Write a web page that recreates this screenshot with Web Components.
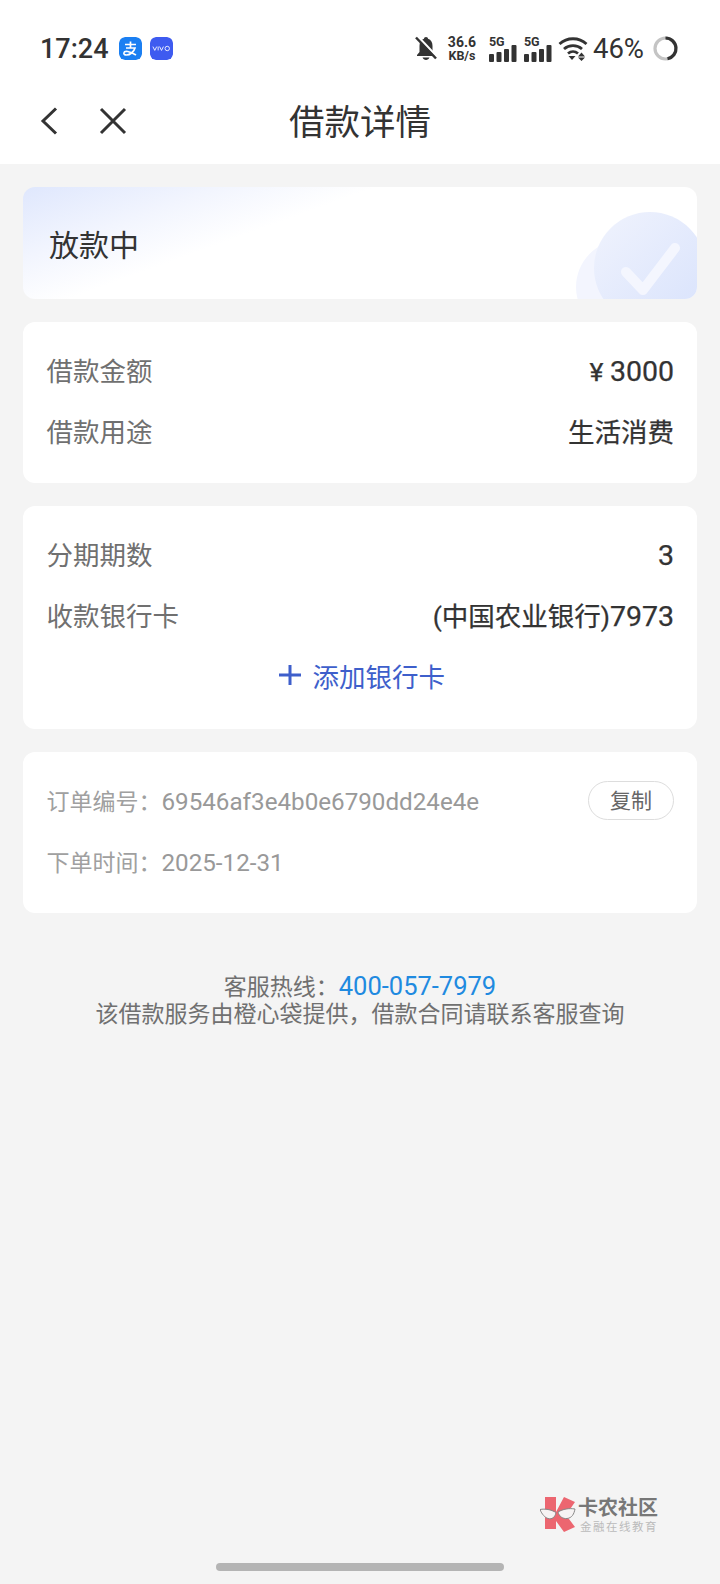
<!DOCTYPE html>
<html lang="zh">
<head>
<meta charset="utf-8">
<title>借款详情</title>
<style>
  html, body { margin: 0; padding: 0; }
  body {
    width: 720px;
    height: 1584px;
    background: #f4f4f4;
    font-family: "Noto Sans CJK SC", "Noto Sans", sans-serif;
    color: #333;
    position: relative;
    overflow: hidden;
  }
  main { display: flex; flex-direction: column; gap: 23px; padding: 23px 23px 0; }
  status-card { margin-bottom: -0.5px; }
</style>
</head>
<body>
  <status-bar></status-bar>
  <nav-bar>借款详情</nav-bar>
  <main>
    <status-card>放款中</status-card>
    <info-card>
      <info-row label="借款金额">¥ <span class="n">3000</span></info-row>
      <info-row label="借款用途">生活消费</info-row>
    </info-card>
    <info-card>
      <info-row label="分期期数"><span class="n">3</span></info-row>
      <info-row label="收款银行卡">(中国农业银行)<span class="n">7973</span></info-row>
      <add-card>添加银行卡</add-card>
    </info-card>
    <info-card>
      <order-row label="订单编号：" value="69546af3e4b0e6790dd24e4e" action="复制"></order-row>
      <order-row label="下单时间：" value="2025-12-31"></order-row>
    </info-card>
  </main>
  <service-note phone="400-057-7979"></service-note>
  <site-mark></site-mark>
  <home-bar></home-bar>

<script>
function el(name, html) {
  customElements.define(name, class extends HTMLElement {
    constructor() {
      super();
      this.attachShadow({ mode: "open" });
      this.shadowRoot.innerHTML = typeof html === "function" ? html(this) : html;
    }
  });
}

const signal = `
  <span class="sig">
    <b>5G</b>
    <svg width="28" height="18" viewBox="0 0 28 18" fill="#333">
      <rect x="0" y="9" width="5" height="8" rx="1"/>
      <rect x="7.500" y="7" width="5" height="10" rx="1"/>
      <rect x="15" y="4" width="5" height="13" rx="1"/>
      <rect x="22.500" y="0" width="5" height="17" rx="1"/>
    </svg>
  </span>`;

el("status-bar", `
  <style>
    :host { display: flex; align-items: center; height: 82px; padding: 15px 42px 0 40px; box-sizing: border-box; background: #fff; color: #333; font-family: Roboto, "Noto Sans", sans-serif; }
    .time { font-size: 27px; font-weight: 500; width: 79px; }
    .app { width: 23px; height: 23px; border-radius: 6px; margin-right: 8px; display: block; }
    .right { margin-left: auto; display: flex; align-items: center; }
    .speed { display: flex; flex-direction: column; align-items: center; font-size: 14px; font-weight: 700; line-height: 14px; margin: 0 12px 0 10px; width: 30px; }
    .speed small { font-size: 12.500px; }
    .sig { position: relative; display: block; width: 28px; height: 26px; margin-right: 7px; }
    .sig b { position: absolute; left: 0; top: -1px; font-size: 12.500px; line-height: 13px; font-weight: 700; }
    .sig svg { position: absolute; left: 0; bottom: -1px; }
    .wifi { margin-left: -1px; }
    .pct { font-size: 27.500px; font-weight: 400; margin: 0 9px 0 5px; }
  </style>
  <span class="time">17:24</span>
  <svg class="app" viewBox="0 0 23 23"><rect width="23" height="23" rx="6" fill="#1b7ff2"/><path d="M6 7.500h11M11.500 4.500v6M7 11h9c-1.200 4-5 7-8.500 7-2 0-3-1-2.500-2.500.6-2 5.500-1.500 12 2.500" fill="none" stroke="#fff" stroke-width="1.700"/></svg>
  <svg class="app" viewBox="0 0 24 24"><rect width="24" height="24" rx="6" fill="#3e5bf0"/><path d="M3 10l2 4 2-4M8.500 10v4M10 10l2 4 2-4" fill="none" stroke="#fff" stroke-width=".9"/><circle cx="18" cy="12" r="2.300" fill="none" stroke="#fff" stroke-width=".9"/></svg>
  <div class="right">
    <svg width="22" height="25" viewBox="0 0 22 25" fill="#333">
      <path d="M11 1c-1.200 0-2 .8-2 1.800C5.800 3.800 4.500 6.500 4.500 10v6L2 19v1h18v-1l-2.500-3v-6c0-3.500-1.300-6.200-4.500-7.200C13 1.800 12.200 1 11 1z"/>
      <path d="M7.500 21.500h7c-.6 1.600-2 2.500-3.500 2.500s-2.900-.9-3.500-2.500z"/>
      <path d="M2.800 0.500l19 20" stroke="#fff" stroke-width="2.500"/>
      <path d="M1 1.500l20 21" stroke="#333" stroke-width="2.500"/>
    </svg>
    <span class="speed">36.6<small>KB/s</small></span>
    ${signal}${signal}
    <svg class="wifi" width="30" height="25" viewBox="0 0 30 25" fill="none" stroke="#333" stroke-width="2.800">
      <path d="M1.500 8C9 1 21 1 28.500 8"/><path d="M6 13c5-4.500 13-4.500 18 0"/><path d="M10 17.500c3-2.500 7-2.500 10 0"/>
      <path d="M10.500 20h7l-3.500 4z" fill="#333" stroke="none"/>
      <path d="M20 20.500h7l-3.500-4zM20 21.500h7l-3.500 3.500z" fill="#333" stroke="none"/>
    </svg>
    <span class="pct">46%</span>
    <svg width="25" height="25" viewBox="0 0 25 25" fill="none" stroke-width="3.200">
      <circle cx="12.500" cy="12.500" r="10.500" stroke="#c4c4c4"/>
      <path d="M12.500 2a10.500 10.500 0 0 1 2 20.800" stroke="#333"/>
    </svg>
  </div>
`);

el("nav-bar", `
  <style>
    :host { display: flex; align-items: center; justify-content: center; position: relative; height: 82px; background: #fff; font-size: 35.500px; color: #333; padding-bottom: 7px; box-sizing: border-box; }
    svg { position: absolute; top: 25px; }
  </style>
  <svg style="left:40px" width="20" height="28" viewBox="0 0 20 28" fill="none" stroke="#333" stroke-width="3"><path d="M16 1.500L3 14l13 12.500"/></svg>
  <svg style="left:99px" width="28" height="28" viewBox="0 0 28 28" fill="none" stroke="#333" stroke-width="3"><path d="M2 2l24 24M26 2L2 26"/></svg>
  <slot></slot>
`);

el("status-card", `
  <style>
    :host { display: flex; align-items: center; position: relative; height: 112px; padding-left: 26px; border-radius: 12px; overflow: hidden; font-size: 30px; color: #333; background: linear-gradient(160deg, #dfe7fd 0%, #f2f5fe 20%, #fff 36%); }
    svg { position: absolute; right: 0; top: 0; }
  </style>
  <slot></slot>
  <svg width="130" height="112" viewBox="0 0 130 112">
    <circle cx="56" cy="100" r="47" fill="#f3f5fe"/>
    <circle cx="83" cy="81" r="56" fill="url(#blob)"/>
    <defs><linearGradient id="blob" x1="0" y1="0" x2="1" y2="1"><stop offset="0" stop-color="#f0f3fd"/><stop offset="1" stop-color="#d8e2fc"/></linearGradient></defs>
    <path d="M59 85l17 18 32-42" fill="none" stroke="#f4f6fe" stroke-width="10" stroke-linecap="round" stroke-linejoin="round"/>
  </svg>
`);

el("info-card", `
  <style>
    :host { display: block; background: #fff; border-radius: 12px; padding: 19.500px 23px 19.500px 23.500px; }
  </style>
  <slot></slot>
`);

el("info-row", el => `
  <style>
    :host { display: flex; align-items: baseline; justify-content: space-between; height: 61px; box-sizing: border-box; padding-top: 10.500px; line-height: 36px; font-size: 26.500px; color: #707070; }
    .value { color: #333; font-family: Roboto, "Noto Sans CJK SC", sans-serif; -webkit-text-stroke: .25px #333; }
    ::slotted(.n) { font-size: 28.500px; }
  </style>
  <span>${el.getAttribute("label")}</span>
  <span class="value"><slot></slot></span>
`);

el("add-card", `
  <style>
    :host { display: flex; align-items: center; justify-content: center; gap: 12px; height: 62px; padding: 0 0 6px 3px; box-sizing: border-box; font-size: 26.500px; color: #3e5fcb; }
  </style>
  <svg width="22" height="22" viewBox="0 0 22 22" stroke="#3e5fcb" stroke-width="3"><path d="M11 1v20M0 11h22"/></svg>
  <slot></slot>
`);

el("order-row", el => {
  const action = el.getAttribute("action");
  return `
  <style>
    :host { display: flex; align-items: baseline; height: 61px; box-sizing: border-box; padding-top: 12px; line-height: 34px; font-size: 23px; color: #a0a0a0; }
    .value { font-family: Roboto, "Noto Sans", sans-serif; font-size: 24.200px; color: #999; }
    button { align-self: flex-start; margin-left: auto; width: 86px; height: 39px; box-sizing: border-box; border: 1px solid #ddd; border-radius: 20px; background: #fff; font: inherit; font-size: 21px; line-height: 30px; color: #666; padding: 0 0 3px; margin-top: -2px; }
  </style>
  <span>${el.getAttribute("label")}</span>
  <span class="value">${el.getAttribute("value")}</span>
  ${action ? `<button>${action}</button>` : ""}`;
});

el("service-note", el => `
  <style>
    :host { display: block; margin-top: 59px; text-align: center; font-size: 23px; line-height: 27px; color: #707070; }
    div { height: 27px; }
    .phone { color: #1f8ae0; font-family: Roboto, "Noto Sans", sans-serif; font-size: 25.500px; }
  </style>
  <div>客服热线：<span class="phone">${el.getAttribute("phone")}</span></div>
  <div>该借款服务由橙心袋提供，借款合同请联系客服查询</div>
`);

el("site-mark", `
  <style>
    :host { position: absolute; left: 540px; top: 1495px; display: flex; gap: 1px; }
    .t { display: flex; flex-direction: column; }
    .a { font-size: 20px; line-height: 24px; font-weight: 700; color: #777; }
    .b { font-size: 11.500px; line-height: 14px; color: #bbb; letter-spacing: 1.500px; margin-left: 2px; }
  </style>
  <svg width="37" height="38" viewBox="0 0 37 38">
    <path d="M5 2h11v15l8-15 11 5-9 13 9 12-11 5-8-11v8H5z" fill="#ec6670"/>
    <path d="M0 14.500c5-1 11 0 16 3-1 5-4 7-8 6-3-1-6-4-8-9zM18 17c5-3 11-4 17-3-1 5-3 9-8 9.500-4 .5-8-2-9-6.500z" fill="#f6f3f3" stroke="#888" stroke-width="1"/>
  </svg>
  <div class="t"><span class="a">卡农社区</span><span class="b">金融在线教育</span></div>
`);

el("home-bar", `
  <style>
    :host { position: absolute; left: 216px; top: 1563px; width: 288px; height: 8px; border-radius: 4px; background: #b4b4b4; }
  </style>
`);
</script>
</body>
</html>
